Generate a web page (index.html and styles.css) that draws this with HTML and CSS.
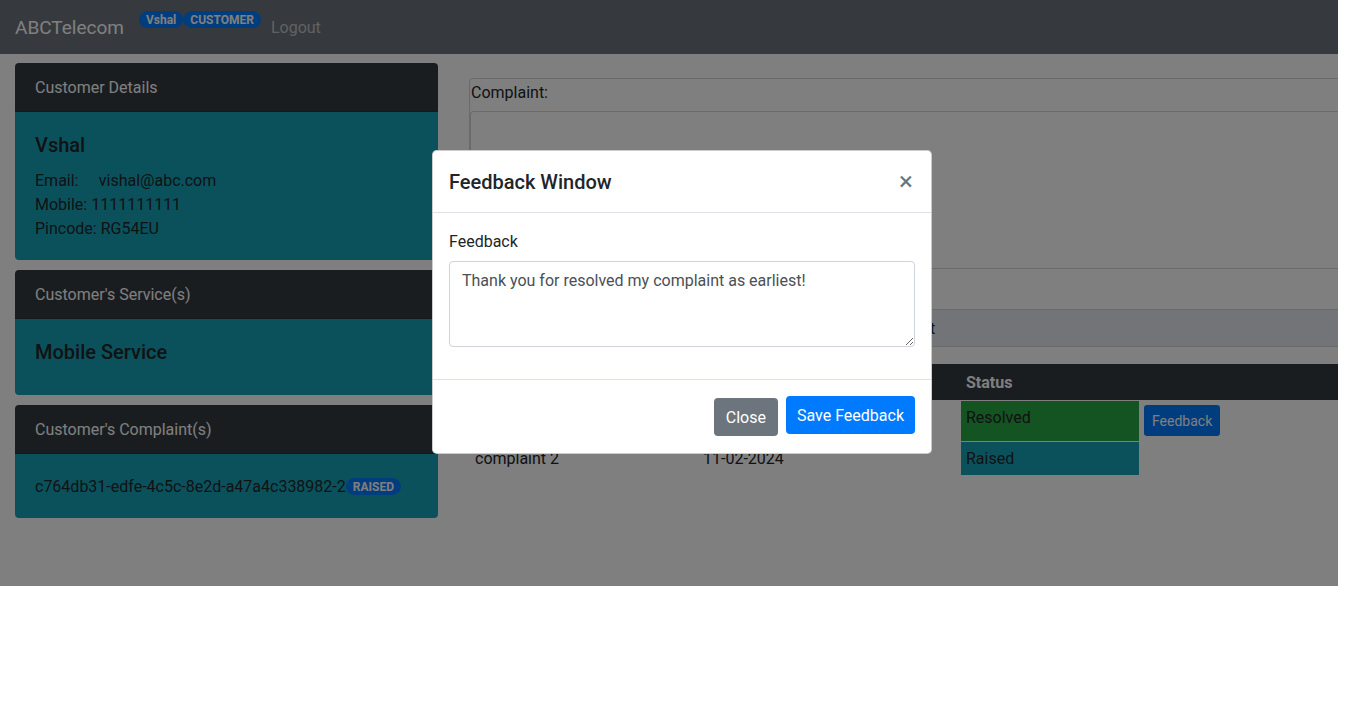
FILE: index.html
```html
<!DOCTYPE html>
<html lang="en">
<head>
<meta charset="utf-8">
<title>ABCTelecom</title>
<link rel="stylesheet" href="styles.css">
</head>
<body>
<div class="stage">
  <nav class="navbar">
    <span class="brand">ABCTelecom</span>
    <span class="badges"><span class="badge">Vshal</span><span class="badge">CUSTOMER</span></span>
    <span class="nav-link">Logout</span>
  </nav>
  <div class="main">
    <aside class="sidebar">
      <section class="card">
        <div class="card-header">Customer Details</div>
        <div class="card-body">
          <h5 class="card-title">Vshal</h5>
          <div>Email:&emsp;&nbsp;vishal@abc.com</div>
          <div>Mobile: 1111111111</div>
          <div>Pincode: RG54EU</div>
        </div>
      </section>
      <section class="card">
        <div class="card-header">Customer's Service(s)</div>
        <div class="card-body">
          <h5 class="card-title">Mobile Service</h5>
        </div>
      </section>
      <section class="card">
        <div class="card-header">Customer's Complaint(s)</div>
        <div class="card-body">
          <div>c764db31-edfe-4c5c-8e2d-a47a4c338982-2<span class="badge">RAISED</span></div>
        </div>
      </section>
    </aside>
    <div class="content">
      <div class="complaint-box">
        <div class="complaint-label">Complaint:</div>
        <div class="complaint-input"></div>
      </div>
      <div class="submit-bar">Submit</div>
      <table class="complaints">
        <colgroup>
          <col class="c1"><col class="c2"><col class="c3"><col class="c4">
        </colgroup>
        <thead>
          <tr><th></th><th></th><th>Status</th><th></th></tr>
        </thead>
        <tbody>
          <tr>
            <td></td><td></td>
            <td class="st-resolved">Resolved</td>
            <td class="cell-btn"><span class="btn-sm">Feedback</span></td>
          </tr>
          <tr>
            <td>complaint 2</td><td>11-02-2024</td>
            <td class="st-raised">Raised</td>
            <td></td>
          </tr>
        </tbody>
      </table>
    </div>
  </div>
  <div class="backdrop"></div>
</div>

<div class="modal">
  <div class="modal-header">
    <h5 class="modal-title">Feedback Window</h5>
    <span class="close">&times;</span>
  </div>
  <div class="modal-body">
    <div class="form-group">
      <label class="form-label">Feedback</label>
      <textarea class="form-control" rows="3">Thank you for resolved my complaint as earliest!</textarea>
    </div>
  </div>
  <div class="modal-footer">
    <span class="btn btn-secondary">Close</span>
    <span class="btn btn-primary">Save Feedback</span>
  </div>
</div>
</body>
</html>
```

FILE: styles.css
```css
* { box-sizing: border-box; }

body {
  margin: 0;
  background: #fff;
  font-family: "Segoe UI", Roboto, "Helvetica Neue", Arial, sans-serif;
  font-size: 16px;
  line-height: 1.5;
  color: #212529;
}

.stage {
  position: relative;
  width: 1338px;
  height: 586px;
  overflow: hidden;
  background: #fff;
}

/* navbar */
.navbar {
  height: 54px;
  background: #6c757d;
  display: flex;
  align-items: center;
  padding: 0 15px;
}
.brand {
  font-size: 19px;
  line-height: 30px;
  padding-top: 1px;
  color: #fff;
  margin-right: 15px;
}
.badges {
  display: flex;
  align-self: flex-start;
  margin-top: 11px;
}
.badge {
  display: inline-block;
  font-size: 12px;
  font-weight: 700;
  line-height: 1;
  padding: 3px 7px 2px;
  border-radius: 10rem;
  background: #007bff;
  color: #fff;
  vertical-align: 1px;
}
.nav-link {
  color: rgba(255, 255, 255, 0.58);
  padding: 1px 8px 0 10px;
  line-height: 24px;
}

/* layout */
.main {
  display: flex;
  align-items: flex-start;
  padding: 9px 0 0 15px;
}
.sidebar {
  flex: 0 0 423px;
  display: flex;
  flex-direction: column;
  gap: 10px;
  margin-right: 31px;
}
.card {
  border-radius: 4px;
  overflow: hidden;
}
.card-header {
  background: #343a40;
  color: #fff;
  padding: 13px 20px 11px;
  line-height: 24px;
  border-bottom: 1px solid rgba(0, 0, 0, 0.125);
}
.card-body {
  background: #17a2b8;
  padding: 21px 20px 19px;
}
.card-title {
  margin: 0 0 12px;
  font-size: 20px;
  font-weight: 500;
  line-height: 24px;
}

/* right column */
.content {
  flex: 0 0 882px;
  padding-top: 15px;
}
.complaint-box {
  border: 1px solid #d4d4d4;
  border-radius: 4px;
}
.complaint-label {
  padding: 2px 0 6px 1px;
  line-height: 24px;
}
.complaint-input {
  height: 157px;
  border: 1px solid #d4d4d4;
  border-bottom: 0;
  border-radius: 4px 4px 0 0;
}
.submit-bar {
  margin-top: 40px;
  height: 38px;
  padding-top: 1px;
  border-top: 1px solid #d4d4d4;
  border-bottom: 1px solid #d4d4d4;
  background: #e4e8ee;
  text-align: center;
  line-height: 35px;
  color: #212529;
}

.complaints {
  margin: 17px 0 0 1px;
  width: 880px;
  border-collapse: collapse;
  table-layout: fixed;
}
.c1 { width: 228px; }
.c2 { width: 263px; }
.c3 { width: 178px; }
.complaints th {
  background: #343a40;
  color: #fff;
  font-weight: 700;
  text-align: left;
  padding: 7px 5px 5px;
  line-height: 24px;
}
.complaints td {
  padding: 5px 5px 4px;
  line-height: 24px;
  vertical-align: top;
  border-top: 1px solid #fff;
}
.complaints td.cell-btn {
  padding-top: 4px;
  padding-bottom: 5px;
}
.st-resolved { background: #28a745; }
.st-raised { background: #17a2b8; }
.btn-sm {
  display: inline-block;
  font-size: 14px;
  line-height: 21px;
  padding: 5px 7px 3px;
  border: 1px solid transparent;
  border-radius: 3.2px;
  background: #007bff;
  color: #fff;
}

.backdrop {
  position: absolute;
  inset: 0;
  background: rgba(0, 0, 0, 0.5);
}

/* modal */
.modal {
  position: absolute;
  left: 432px;
  top: 150px;
  width: 500px;
  background: #fff;
  border: 1px solid rgba(0, 0, 0, 0.2);
  border-radius: 4.8px;
}
.modal-header {
  display: flex;
  align-items: flex-start;
  padding: 16px 16px 15px;
  border-bottom: 1px solid #dee2e6;
}
.modal-title {
  margin: 0;
  font-size: 20px;
  font-weight: 500;
  line-height: 30px;
}
.close {
  margin-left: auto;
  margin-right: 2px;
  margin-top: 2px;
  font-size: 26px;
  font-weight: 400;
  line-height: 24px;
  color: #000;
  opacity: 0.55;
}
.modal-body {
  padding: 17px 16px 17px;
}
.form-group {
  margin-bottom: 15px;
}
.form-label {
  display: block;
  margin-bottom: 7px;
}
.form-control {
  display: block;
  width: 100%;
  height: 86px;
  padding: 7px 12px 5px;
  font-family: inherit;
  font-size: 16px;
  line-height: 1.5;
  color: #495057;
  background: #fff;
  border: 1px solid #ced4da;
  border-radius: 4px;
  resize: vertical;
  margin: 0;
}
.modal-footer {
  display: flex;
  justify-content: flex-end;
  align-items: flex-start;
  padding: 12px 12px 13px;
  border-top: 1px solid #dee2e6;
}
.btn {
  display: inline-block;
  margin: 4px;
  padding: 7px 11px 5px;
  line-height: 24px;
  border: 1px solid transparent;
  border-radius: 4px;
  color: #fff;
}
.btn-secondary {
  background: #6c757d;
  margin-top: 6px;
}
.btn-primary {
  background: #007bff;
  padding-left: 10px;
  padding-right: 10px;
}
```
